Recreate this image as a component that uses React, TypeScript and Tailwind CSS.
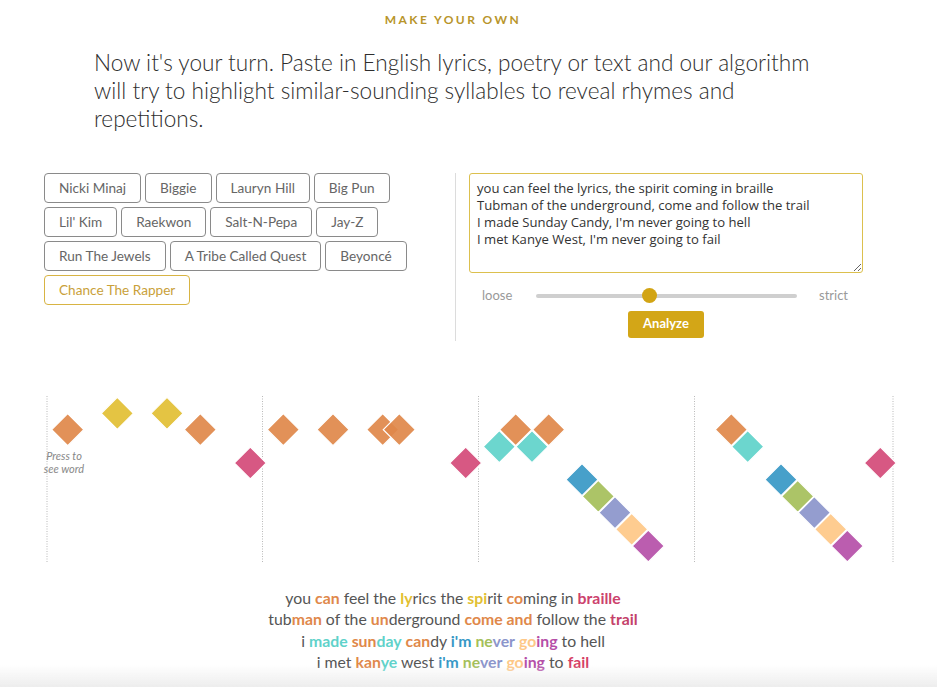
import React from 'react';

const ARTISTS = [
  'Nicki Minaj',
  'Biggie',
  'Lauryn Hill',
  'Big Pun',
  "Lil' Kim",
  'Raekwon',
  'Salt-N-Pepa',
  'Jay-Z',
  'Run The Jewels',
  'A Tribe Called Quest',
  'Beyoncé',
];

const C = {
  orange: '#e0884a',
  yellow: '#e2bf33',
  pink: '#d44a78',
  cyan: '#5fd2ca',
  blue: '#3798c6',
  green: '#a5bf5a',
  lav: '#8b95cb',
  peach: '#fec887',
  purple: '#b54fa8',
};

// syllable markers, page coordinates (centre of each diamond)
const DIAMONDS: { x: number; y: number; c: string }[] = [
  { x: 67.7, y: 428.7, c: C.orange },
  { x: 117.3, y: 412.3, c: C.yellow },
  { x: 167, y: 412.3, c: C.yellow },
  { x: 200.3, y: 428.7, c: C.orange },
  { x: 250.3, y: 462, c: C.pink },

  { x: 283.3, y: 428.7, c: C.orange },
  { x: 333, y: 428.7, c: C.orange },
  { x: 382.7, y: 428.7, c: C.orange },
  { x: 399.3, y: 428.7, c: C.orange },
  { x: 465.7, y: 462, c: C.pink },

  { x: 499.3, y: 445.7, c: C.cyan },
  { x: 515.7, y: 428.7, c: C.orange },
  { x: 532, y: 445.7, c: C.cyan },
  { x: 548.7, y: 428.7, c: C.orange },
  { x: 582, y: 478.7, c: C.blue },
  { x: 598.3, y: 495.3, c: C.green },
  { x: 615, y: 511.7, c: C.lav },
  { x: 631.7, y: 528.3, c: C.peach },
  { x: 648.3, y: 545, c: C.purple },

  { x: 731.3, y: 428.7, c: C.orange },
  { x: 747.7, y: 445.7, c: C.cyan },
  { x: 781, y: 478.7, c: C.blue },
  { x: 797.7, y: 495.3, c: C.green },
  { x: 814.3, y: 511.7, c: C.lav },
  { x: 830.7, y: 528.3, c: C.peach },
  { x: 847.3, y: 545, c: C.purple },
  { x: 880.3, y: 462, c: C.pink },
];

const GUIDES = [47, 262.5, 478.5, 694.5, 893];

type Part = string | [string, string];

const LYRICS: Part[][] = [
  ['you ', ['can', C.orange], ' feel the ', ['ly', C.yellow], 'rics the ', ['spi', C.yellow], 'rit ', ['co', C.orange], 'ming in ', ['braille', '#cc426d']],
  ['tub', ['man', C.orange], ' of the ', ['un', C.orange], 'derground ', ['come and', C.orange], ' follow the ', ['trail', '#c4416a']],
  ['i ', ['made', C.cyan], ' ', ['sun', C.orange], ['day', C.cyan], ' ', ['can', C.orange], 'dy ', ["i'm", C.blue], ' ', ['ne', C.green], ['ver', C.lav], ' ', ['go', C.peach], ['ing', C.purple], ' to hell'],
  ['i met ', ['kan', C.orange], ['ye', C.cyan], ' west ', ["i'm", C.blue], ' ', ['ne', C.green], ['ver', C.lav], ' ', ['go', C.peach], ['ing', C.purple], ' to ', ['fail', '#d63f66']],
];

function Diamond({ x, y, c }: { x: number; y: number; c: string }) {
  const r = 16;
  return (
    <polygon
      points={`${x - r},${y} ${x},${y - r} ${x + r},${y} ${x},${y + r}`}
      fill={c}
      fillOpacity={0.92}
      stroke="#fff"
      strokeWidth={1.2}
    />
  );
}

export default function App() {
  return (
    <div className="min-h-screen bg-white text-[#333] font-['Lato',sans-serif]">
      <div className="w-[906px]">
        {/* ── Heading ── */}
        <p className="pt-[12px] text-center text-[12px] leading-[16px] font-bold tracking-[0.2em] text-[#b8952a]">
          MAKE YOUR OWN
        </p>

        <p className="mx-auto mt-[21px] w-[718px] text-[22.6px] leading-[28px] font-light text-[#2e2e2e]">
          Now it's your turn. Paste in English lyrics, poetry or text and our algorithm
          will try to highlight similar-sounding syllables to reveal rhymes and
          repetitions.
        </p>

        {/* ── Input panel ── */}
        <div className="mx-auto mt-[40px] flex w-[818px]">
          <div className="w-[411px] shrink-0 pr-[20px]">
            <div className="flex flex-wrap gap-[4px]">
              {ARTISTS.map((a) => (
                <button
                  key={a}
                  className="h-[30px] rounded-[4px] border border-[#8a8a8a] px-[14px] text-[13.6px] text-[#666]"
                >
                  {a}
                </button>
              ))}
              <button className="h-[30px] rounded-[4px] border border-[#d8b443] px-[14px] text-[13.6px] text-[#c9a13a]">
                Chance The Rapper
              </button>
            </div>
          </div>

          <div className="flex h-[168px] flex-1 flex-col items-center border-l border-[#dcdcdc] pl-[13px]">
            <textarea
              defaultValue={
                "you can feel the lyrics, the spirit coming in braille\nTubman of the underground, come and follow the trail\nI made Sunday Candy, I'm never going to hell\nI met Kanye West, I'm never going to fail"
              }
              className="h-[100px] w-[394px] rounded-[3px] border border-[#dcc04e] px-[7px] py-[6px] font-['Open_Sans',sans-serif] text-[13.1px] leading-[17px] text-[#333] outline-none"
            />
            <div className="mt-[13px] flex w-[394px] items-center">
              <span className="w-[67px] pl-[13px] text-[13px] text-[#999]">loose</span>
              <div className="relative h-[4px] w-[261px] rounded-full bg-[#cfcfcf]">
                <div className="absolute left-[106px] top-[-5.5px] h-[15px] w-[15px] rounded-full bg-[#d2a414]" />
              </div>
              <span className="pl-[22px] text-[13px] text-[#999]">strict</span>
            </div>
            <button className="mt-[5px] h-[27px] w-[76px] rounded-[3px] bg-[#d3a617] text-[13px] font-bold text-white">
              Analyze
            </button>
          </div>
        </div>

        {/* ── Rhyme chart ── */}
        <div className="relative mt-[55px] h-[170px]">
          <svg
            width={906}
            height={170}
            viewBox="0 395 906 170"
            className="overflow-visible"
          >
            {GUIDES.map((x) => (
              <line
                key={x}
                x1={x}
                x2={x}
                y1={395}
                y2={562}
                stroke="#b9b9b9"
                strokeWidth={1}
                strokeDasharray="1 1.5"
              />
            ))}
            {DIAMONDS.map((d, i) => (
              <Diamond key={i} {...d} />
            ))}
          </svg>
          <p className="absolute left-[38px] top-[53px] w-[52px] text-center text-[11px] italic leading-[13px] text-[#888]">
            Press to see word
          </p>
        </div>

        {/* ── Highlighted lyrics ── */}
        <div className="mt-[21px] text-center text-[15.8px] leading-[21.3px] text-[#555]">
          {LYRICS.map((line, i) => (
            <p key={i}>
              {line.map((p, j) =>
                typeof p === 'string' ? (
                  <span key={j}>{p}</span>
                ) : (
                  <span key={j} className="font-bold" style={{ color: p[1] }}>
                    {p[0]}
                  </span>
                ),
              )}
            </p>
          ))}
        </div>
      </div>

      <div className="fixed bottom-0 left-0 right-0 h-[22px] bg-gradient-to-b from-white/0 to-[#ededed]" />
    </div>
  );
}
